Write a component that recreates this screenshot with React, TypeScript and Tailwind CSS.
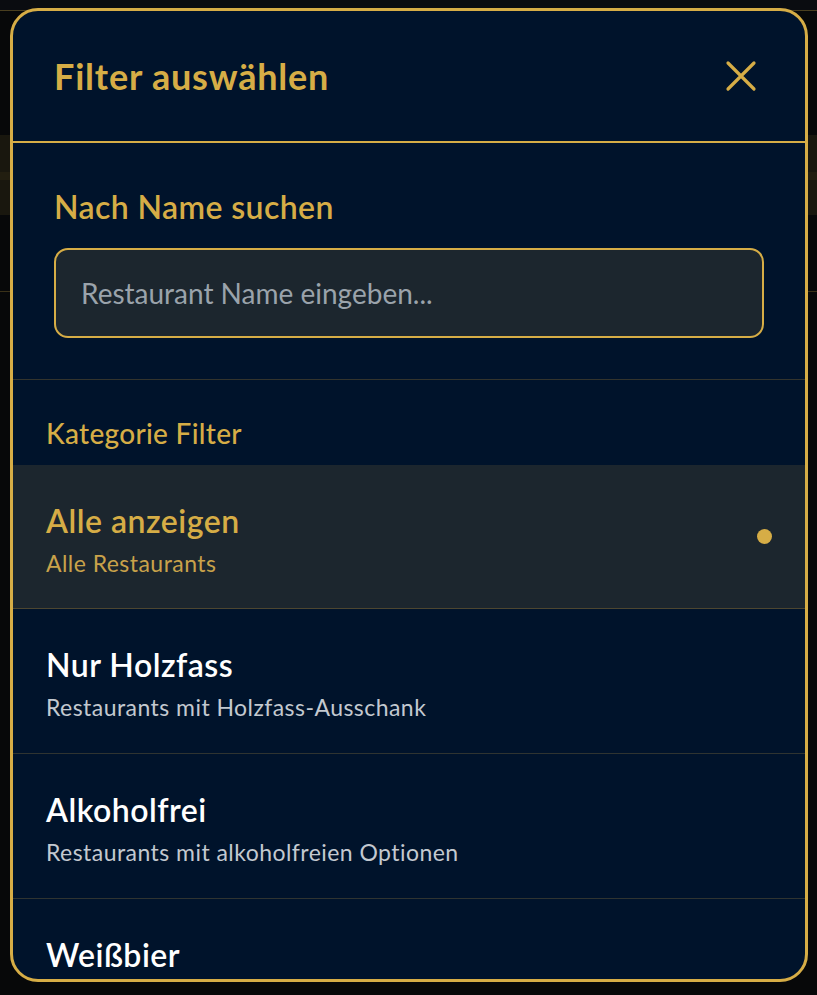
import React from "react";

const rows = [
  { title: "Alle anzeigen", sub: "Alle Restaurants", active: true },
  { title: "Nur Holzfass", sub: "Restaurants mit Holzfass-Ausschank" },
  { title: "Alkoholfrei", sub: "Restaurants mit alkoholfreien Optionen" },
  { title: "Weißbier", sub: "Restaurants mit Weißbier" },
];

export default function App() {
  return (
    <div
      className="relative h-[995px] w-full overflow-hidden bg-[#070809]"
      style={{ fontFamily: 'Lato, "Noto Sans", sans-serif' }}
    >
      {/* page behind the overlay */}
      <div className="flex flex-col">
        <div className="h-[11px] border-b border-[#4a3f1f] bg-[#0a0c10]" />
        <div className="h-[124px]" />
        <div className="flex h-[80px] flex-col bg-[#19170e]">
          <div className="h-[37px]" />
          <div className="h-[8px] bg-[#221e10]" />
        </div>
        <div className="h-[77px] border-b border-[#3a3118]" />
      </div>

      {/* modal */}
      <div className="absolute left-[10px] right-[9px] top-[8px] bottom-[13px] flex flex-col overflow-hidden rounded-[28px] border-[3px] border-[#d6ad46] bg-[#00132b]">
        <div className="flex h-[132px] shrink-0 items-center justify-between border-b-2 border-[#d6ad46] pl-[41px] pr-[48px]">
          <h2 className="text-[36px] font-bold leading-none tracking-[0.8px] text-[#d6ad46]">
            Filter auswählen
          </h2>
          <svg width="32" height="32" viewBox="0 0 32 32" fill="none" stroke="#d6ad46" strokeWidth="3.2" strokeLinecap="round">
            <path d="M3 3 L29 29 M29 3 L3 29" />
          </svg>
        </div>

        <div className="shrink-0 border-b border-[#33342d] px-[41px] pt-[45px] pb-[41px]">
          <div className="text-[32px] font-semibold leading-[38px] tracking-[0.4px] text-[#d6ad46]">
            Nach Name suchen
          </div>
          <div className="mt-[22px] flex h-[90px] items-center rounded-[14px] border-2 border-[#d6ad46] bg-[#1c262e] px-[25px]">
            <span className="text-[28px] leading-none text-[#9aa3ab]">
              Restaurant Name eingeben...
            </span>
          </div>
        </div>

        <div className="shrink-0 px-[33px] pt-[37px] pb-[16px]">
          <div className="text-[28px] font-medium leading-[32px] tracking-[0.3px] text-[#d6ad46]">
            Kategorie Filter
          </div>
        </div>

        <div className="flex flex-col">
          {rows.map((r) => (
            <div
              key={r.title}
              className={
                r.active
                  ? "flex h-[144px] shrink-0 items-center justify-between border-b border-[#4d4630] bg-[#1c262e] pl-[33px] pr-[33px]"
                  : "flex h-[145px] shrink-0 items-center justify-between border-b border-[#2f3431] pl-[33px] pr-[33px]"
              }
            >
              <div className="flex flex-col self-start pt-[37px]">
                <div
                  className={
                    r.active
                      ? "text-[32px] font-semibold leading-[38px] tracking-[0.5px] text-[#d6ad46]"
                      : "text-[32px] font-semibold leading-[38px] tracking-[0.5px] text-white"
                  }
                >
                  {r.title}
                </div>
                <div
                  className={
                    r.active
                      ? "mt-[9px] text-[23px] leading-[28px] tracking-[0.45px] text-[#c9a24a]"
                      : "mt-[9px] text-[23px] leading-[28px] tracking-[0.45px] text-[#c3c9d0]"
                  }
                >
                  {r.sub}
                </div>
              </div>
              {r.active && <div className="h-[15px] w-[15px] rounded-full bg-[#d6ad46]" />}
            </div>
          ))}
        </div>
      </div>
    </div>
  );
}
